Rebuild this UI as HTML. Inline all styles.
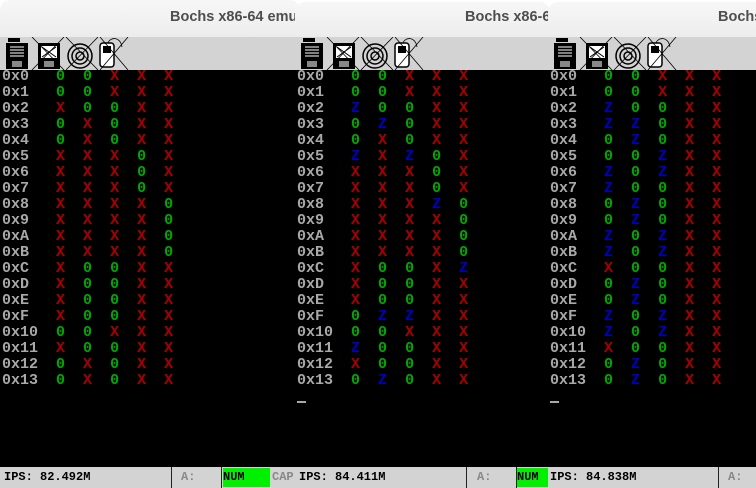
<!DOCTYPE html>
<html><head><meta charset="utf-8"><style>
body{margin:0;width:756px;height:488px;overflow:hidden;background:#fff;position:relative;font-family:"Liberation Sans",sans-serif}
.win{position:absolute;top:0;height:488px;overflow:hidden}
.tb{position:absolute;left:0;right:0;top:0;height:37px;background:linear-gradient(#f7f7f7,#ececec);border-top-left-radius:10px;border-top-right-radius:10px}
.title{position:absolute;top:9px;font-weight:bold;font-size:14.5px;color:#4e4e4e;white-space:nowrap}
.tool{position:absolute;left:0;right:0;top:37px;height:33px;background:#d3d3d3}
.scr{position:absolute;left:0;right:0;top:70px;height:397px;background:#000}
pre{margin:0;position:absolute;left:2px;top:-1px;font-family:"Liberation Mono",monospace;font-size:15px;line-height:16px;color:#a8a8a8;font-weight:bold}
pre i{font-style:normal}
.g{color:#00a800}.r{color:#a80000}.b{color:#0000c0}
.cur{position:absolute;left:2px;top:331px;width:9px;height:2px;background:#a8a8a8}
.st{position:absolute;left:0;right:0;top:467px;height:21px;background:#d3d3d3;font-family:"Liberation Mono",monospace;font-size:12px;font-weight:bold;line-height:21px;color:#000}
.st span{position:absolute;top:0}
.sep{position:absolute;top:0;width:1px;height:21px;background:#222}
.num{position:absolute;top:1px;height:19px;background:#00f000;line-height:19px}
svg{position:absolute;top:37px;left:0}
</style></head><body>

<div class="win" style="left:0;width:300px">
<div class="tb"></div><div class="title" style="left:170px">Bochs x86-64 emu</div>
<div class="tool"></div>
<svg width="140" height="33" viewBox="0 0 140 33">
<g fill="#000"><rect x="6" y="6" width="22" height="26"/><rect x="8" y="1" width="12" height="4"/></g>
<g stroke="#fff" stroke-width="1"><line x1="10" y1="10" x2="24" y2="10"/><line x1="10" y1="13" x2="24" y2="13"/><line x1="10" y1="16" x2="24" y2="16"/><line x1="10" y1="19" x2="24" y2="19"/></g>
<rect x="12" y="24" width="10" height="6" fill="#888"/>
<g fill="#000"><rect x="38" y="6" width="22" height="26"/></g>
<rect x="41" y="9" width="16" height="12" fill="#fff"/><path d="M42 10L56 20M56 10L42 20" stroke="#000"/>
<rect x="44" y="24" width="10" height="6" fill="#888"/>
<path d="M32 0L64 33M64 0L32 33" stroke="#000" stroke-width="0.8"/>
<circle cx="80" cy="19" r="12" fill="none" stroke="#000" stroke-width="1.5"/><circle cx="80" cy="19" r="8" fill="none" stroke="#000" stroke-width="1.5"/><circle cx="80" cy="19" r="4" fill="none" stroke="#000" stroke-width="1.5"/>
<path d="M66 0L98 33M98 0L66 33" stroke="#000" stroke-width="0.8"/>
<rect x="100" y="6" width="14" height="24" rx="3" fill="#fff" stroke="#000" stroke-width="1.5"/><rect x="103" y="9" width="8" height="7" fill="#000"/>
<path d="M108 6C110 0 120 -1 122 10M100 0L128 33M128 0L100 33" stroke="#000" fill="none" stroke-width="0.8"/>
</svg>
<div class="scr"><pre>0x0   <i class="g">0</i>  <i class="g">0</i>  <i class="r">X</i>  <i class="r">X</i>  <i class="r">X</i>
0x1   <i class="g">0</i>  <i class="g">0</i>  <i class="r">X</i>  <i class="r">X</i>  <i class="r">X</i>
0x2   <i class="r">X</i>  <i class="g">0</i>  <i class="g">0</i>  <i class="r">X</i>  <i class="r">X</i>
0x3   <i class="g">0</i>  <i class="r">X</i>  <i class="g">0</i>  <i class="r">X</i>  <i class="r">X</i>
0x4   <i class="g">0</i>  <i class="r">X</i>  <i class="g">0</i>  <i class="r">X</i>  <i class="r">X</i>
0x5   <i class="r">X</i>  <i class="r">X</i>  <i class="r">X</i>  <i class="g">0</i>  <i class="r">X</i>
0x6   <i class="r">X</i>  <i class="r">X</i>  <i class="r">X</i>  <i class="g">0</i>  <i class="r">X</i>
0x7   <i class="r">X</i>  <i class="r">X</i>  <i class="r">X</i>  <i class="g">0</i>  <i class="r">X</i>
0x8   <i class="r">X</i>  <i class="r">X</i>  <i class="r">X</i>  <i class="r">X</i>  <i class="g">0</i>
0x9   <i class="r">X</i>  <i class="r">X</i>  <i class="r">X</i>  <i class="r">X</i>  <i class="g">0</i>
0xA   <i class="r">X</i>  <i class="r">X</i>  <i class="r">X</i>  <i class="r">X</i>  <i class="g">0</i>
0xB   <i class="r">X</i>  <i class="r">X</i>  <i class="r">X</i>  <i class="r">X</i>  <i class="g">0</i>
0xC   <i class="r">X</i>  <i class="g">0</i>  <i class="g">0</i>  <i class="r">X</i>  <i class="r">X</i>
0xD   <i class="r">X</i>  <i class="g">0</i>  <i class="g">0</i>  <i class="r">X</i>  <i class="r">X</i>
0xE   <i class="r">X</i>  <i class="g">0</i>  <i class="g">0</i>  <i class="r">X</i>  <i class="r">X</i>
0xF   <i class="r">X</i>  <i class="g">0</i>  <i class="g">0</i>  <i class="r">X</i>  <i class="r">X</i>
0x10  <i class="g">0</i>  <i class="g">0</i>  <i class="r">X</i>  <i class="r">X</i>  <i class="r">X</i>
0x11  <i class="r">X</i>  <i class="g">0</i>  <i class="g">0</i>  <i class="r">X</i>  <i class="r">X</i>
0x12  <i class="g">0</i>  <i class="r">X</i>  <i class="g">0</i>  <i class="r">X</i>  <i class="r">X</i>
0x13  <i class="g">0</i>  <i class="r">X</i>  <i class="g">0</i>  <i class="r">X</i>  <i class="r">X</i></pre></div>
<div class="st"><span style="left:4px">IPS: 82.492M</span><div class="sep" style="left:171px"></div><span style="left:181px;color:#888">A:</span><div class="sep" style="left:221px"></div><div class="num" style="left:223px;width:47px"><span style="left:0">NUM</span></div><span style="left:272px;color:#888">CAP</span></div>
</div>

<div class="win" style="left:295px;width:255px">
<div class="tb" style="top:2px"></div><div class="title" style="left:170px">Bochs x86-64 emu</div>
<div class="tool"></div>
<svg width="140" height="33" viewBox="0 0 140 33">
<g fill="#000"><rect x="6" y="6" width="22" height="26"/><rect x="8" y="1" width="12" height="4"/></g>
<g stroke="#fff" stroke-width="1"><line x1="10" y1="10" x2="24" y2="10"/><line x1="10" y1="13" x2="24" y2="13"/><line x1="10" y1="16" x2="24" y2="16"/><line x1="10" y1="19" x2="24" y2="19"/></g>
<rect x="12" y="24" width="10" height="6" fill="#888"/>
<g fill="#000"><rect x="38" y="6" width="22" height="26"/></g>
<rect x="41" y="9" width="16" height="12" fill="#fff"/><path d="M42 10L56 20M56 10L42 20" stroke="#000"/>
<rect x="44" y="24" width="10" height="6" fill="#888"/>
<path d="M32 0L64 33M64 0L32 33" stroke="#000" stroke-width="0.8"/>
<circle cx="80" cy="19" r="12" fill="none" stroke="#000" stroke-width="1.5"/><circle cx="80" cy="19" r="8" fill="none" stroke="#000" stroke-width="1.5"/><circle cx="80" cy="19" r="4" fill="none" stroke="#000" stroke-width="1.5"/>
<path d="M66 0L98 33M98 0L66 33" stroke="#000" stroke-width="0.8"/>
<rect x="100" y="6" width="14" height="24" rx="3" fill="#fff" stroke="#000" stroke-width="1.5"/><rect x="103" y="9" width="8" height="7" fill="#000"/>
<path d="M108 6C110 0 120 -1 122 10M100 0L128 33M128 0L100 33" stroke="#000" fill="none" stroke-width="0.8"/>
</svg>
<div class="scr"><pre>0x0   <i class="g">0</i>  <i class="g">0</i>  <i class="r">X</i>  <i class="r">X</i>  <i class="r">X</i>
0x1   <i class="g">0</i>  <i class="g">0</i>  <i class="r">X</i>  <i class="r">X</i>  <i class="r">X</i>
0x2   <i class="b">Z</i>  <i class="g">0</i>  <i class="g">0</i>  <i class="r">X</i>  <i class="r">X</i>
0x3   <i class="g">0</i>  <i class="b">Z</i>  <i class="g">0</i>  <i class="r">X</i>  <i class="r">X</i>
0x4   <i class="g">0</i>  <i class="r">X</i>  <i class="g">0</i>  <i class="r">X</i>  <i class="r">X</i>
0x5   <i class="b">Z</i>  <i class="r">X</i>  <i class="b">Z</i>  <i class="g">0</i>  <i class="r">X</i>
0x6   <i class="r">X</i>  <i class="r">X</i>  <i class="r">X</i>  <i class="g">0</i>  <i class="r">X</i>
0x7   <i class="r">X</i>  <i class="r">X</i>  <i class="r">X</i>  <i class="g">0</i>  <i class="r">X</i>
0x8   <i class="r">X</i>  <i class="r">X</i>  <i class="r">X</i>  <i class="b">Z</i>  <i class="g">0</i>
0x9   <i class="r">X</i>  <i class="r">X</i>  <i class="r">X</i>  <i class="r">X</i>  <i class="g">0</i>
0xA   <i class="r">X</i>  <i class="r">X</i>  <i class="r">X</i>  <i class="r">X</i>  <i class="g">0</i>
0xB   <i class="r">X</i>  <i class="r">X</i>  <i class="r">X</i>  <i class="r">X</i>  <i class="g">0</i>
0xC   <i class="r">X</i>  <i class="g">0</i>  <i class="g">0</i>  <i class="r">X</i>  <i class="b">Z</i>
0xD   <i class="r">X</i>  <i class="g">0</i>  <i class="g">0</i>  <i class="r">X</i>  <i class="r">X</i>
0xE   <i class="r">X</i>  <i class="g">0</i>  <i class="g">0</i>  <i class="r">X</i>  <i class="r">X</i>
0xF   <i class="g">0</i>  <i class="b">Z</i>  <i class="b">Z</i>  <i class="r">X</i>  <i class="r">X</i>
0x10  <i class="g">0</i>  <i class="g">0</i>  <i class="r">X</i>  <i class="r">X</i>  <i class="r">X</i>
0x11  <i class="b">Z</i>  <i class="g">0</i>  <i class="g">0</i>  <i class="r">X</i>  <i class="r">X</i>
0x12  <i class="r">X</i>  <i class="g">0</i>  <i class="g">0</i>  <i class="r">X</i>  <i class="r">X</i>
0x13  <i class="g">0</i>  <i class="b">Z</i>  <i class="g">0</i>  <i class="r">X</i>  <i class="r">X</i></pre><div class="cur"></div></div>
<div class="st"><span style="left:4px">IPS: 84.411M</span><div class="sep" style="left:171px"></div><span style="left:182px;color:#888">A:</span><div class="sep" style="left:221px"></div><div class="num" style="left:222px;width:31px"><span style="left:0">NUM</span></div></div>
</div>

<div class="win" style="left:548px;width:208px">
<div class="tb" style="top:2px;border-top-right-radius:0"></div><div class="title" style="left:170px">Bochs x86-64 emu</div>
<div class="tool"></div>
<svg width="140" height="33" viewBox="0 0 140 33">
<g fill="#000"><rect x="6" y="6" width="22" height="26"/><rect x="8" y="1" width="12" height="4"/></g>
<g stroke="#fff" stroke-width="1"><line x1="10" y1="10" x2="24" y2="10"/><line x1="10" y1="13" x2="24" y2="13"/><line x1="10" y1="16" x2="24" y2="16"/><line x1="10" y1="19" x2="24" y2="19"/></g>
<rect x="12" y="24" width="10" height="6" fill="#888"/>
<g fill="#000"><rect x="38" y="6" width="22" height="26"/></g>
<rect x="41" y="9" width="16" height="12" fill="#fff"/><path d="M42 10L56 20M56 10L42 20" stroke="#000"/>
<rect x="44" y="24" width="10" height="6" fill="#888"/>
<path d="M32 0L64 33M64 0L32 33" stroke="#000" stroke-width="0.8"/>
<circle cx="80" cy="19" r="12" fill="none" stroke="#000" stroke-width="1.5"/><circle cx="80" cy="19" r="8" fill="none" stroke="#000" stroke-width="1.5"/><circle cx="80" cy="19" r="4" fill="none" stroke="#000" stroke-width="1.5"/>
<path d="M66 0L98 33M98 0L66 33" stroke="#000" stroke-width="0.8"/>
<rect x="100" y="6" width="14" height="24" rx="3" fill="#fff" stroke="#000" stroke-width="1.5"/><rect x="103" y="9" width="8" height="7" fill="#000"/>
<path d="M108 6C110 0 120 -1 122 10M100 0L128 33M128 0L100 33" stroke="#000" fill="none" stroke-width="0.8"/>
</svg>
<div class="scr"><pre>0x0   <i class="g">0</i>  <i class="g">0</i>  <i class="r">X</i>  <i class="r">X</i>  <i class="r">X</i>
0x1   <i class="g">0</i>  <i class="g">0</i>  <i class="r">X</i>  <i class="r">X</i>  <i class="r">X</i>
0x2   <i class="b">Z</i>  <i class="g">0</i>  <i class="g">0</i>  <i class="r">X</i>  <i class="r">X</i>
0x3   <i class="b">Z</i>  <i class="b">Z</i>  <i class="g">0</i>  <i class="r">X</i>  <i class="r">X</i>
0x4   <i class="g">0</i>  <i class="b">Z</i>  <i class="g">0</i>  <i class="r">X</i>  <i class="r">X</i>
0x5   <i class="g">0</i>  <i class="g">0</i>  <i class="b">Z</i>  <i class="r">X</i>  <i class="r">X</i>
0x6   <i class="b">Z</i>  <i class="g">0</i>  <i class="b">Z</i>  <i class="r">X</i>  <i class="r">X</i>
0x7   <i class="b">Z</i>  <i class="g">0</i>  <i class="g">0</i>  <i class="r">X</i>  <i class="r">X</i>
0x8   <i class="g">0</i>  <i class="b">Z</i>  <i class="g">0</i>  <i class="r">X</i>  <i class="r">X</i>
0x9   <i class="g">0</i>  <i class="b">Z</i>  <i class="g">0</i>  <i class="r">X</i>  <i class="r">X</i>
0xA   <i class="b">Z</i>  <i class="g">0</i>  <i class="b">Z</i>  <i class="r">X</i>  <i class="r">X</i>
0xB   <i class="b">Z</i>  <i class="g">0</i>  <i class="b">Z</i>  <i class="r">X</i>  <i class="r">X</i>
0xC   <i class="r">X</i>  <i class="g">0</i>  <i class="g">0</i>  <i class="r">X</i>  <i class="r">X</i>
0xD   <i class="g">0</i>  <i class="b">Z</i>  <i class="g">0</i>  <i class="r">X</i>  <i class="r">X</i>
0xE   <i class="g">0</i>  <i class="b">Z</i>  <i class="g">0</i>  <i class="r">X</i>  <i class="r">X</i>
0xF   <i class="b">Z</i>  <i class="g">0</i>  <i class="b">Z</i>  <i class="r">X</i>  <i class="r">X</i>
0x10  <i class="b">Z</i>  <i class="g">0</i>  <i class="b">Z</i>  <i class="r">X</i>  <i class="r">X</i>
0x11  <i class="r">X</i>  <i class="g">0</i>  <i class="g">0</i>  <i class="r">X</i>  <i class="r">X</i>
0x12  <i class="g">0</i>  <i class="b">Z</i>  <i class="g">0</i>  <i class="r">X</i>  <i class="r">X</i>
0x13  <i class="g">0</i>  <i class="b">Z</i>  <i class="g">0</i>  <i class="r">X</i>  <i class="r">X</i></pre><div class="cur"></div></div>
<div class="st"><span style="left:2px">IPS: 84.838M</span><div class="sep" style="left:170px"></div><span style="left:180px;color:#888">A:</span></div>
</div>
</body></html>
